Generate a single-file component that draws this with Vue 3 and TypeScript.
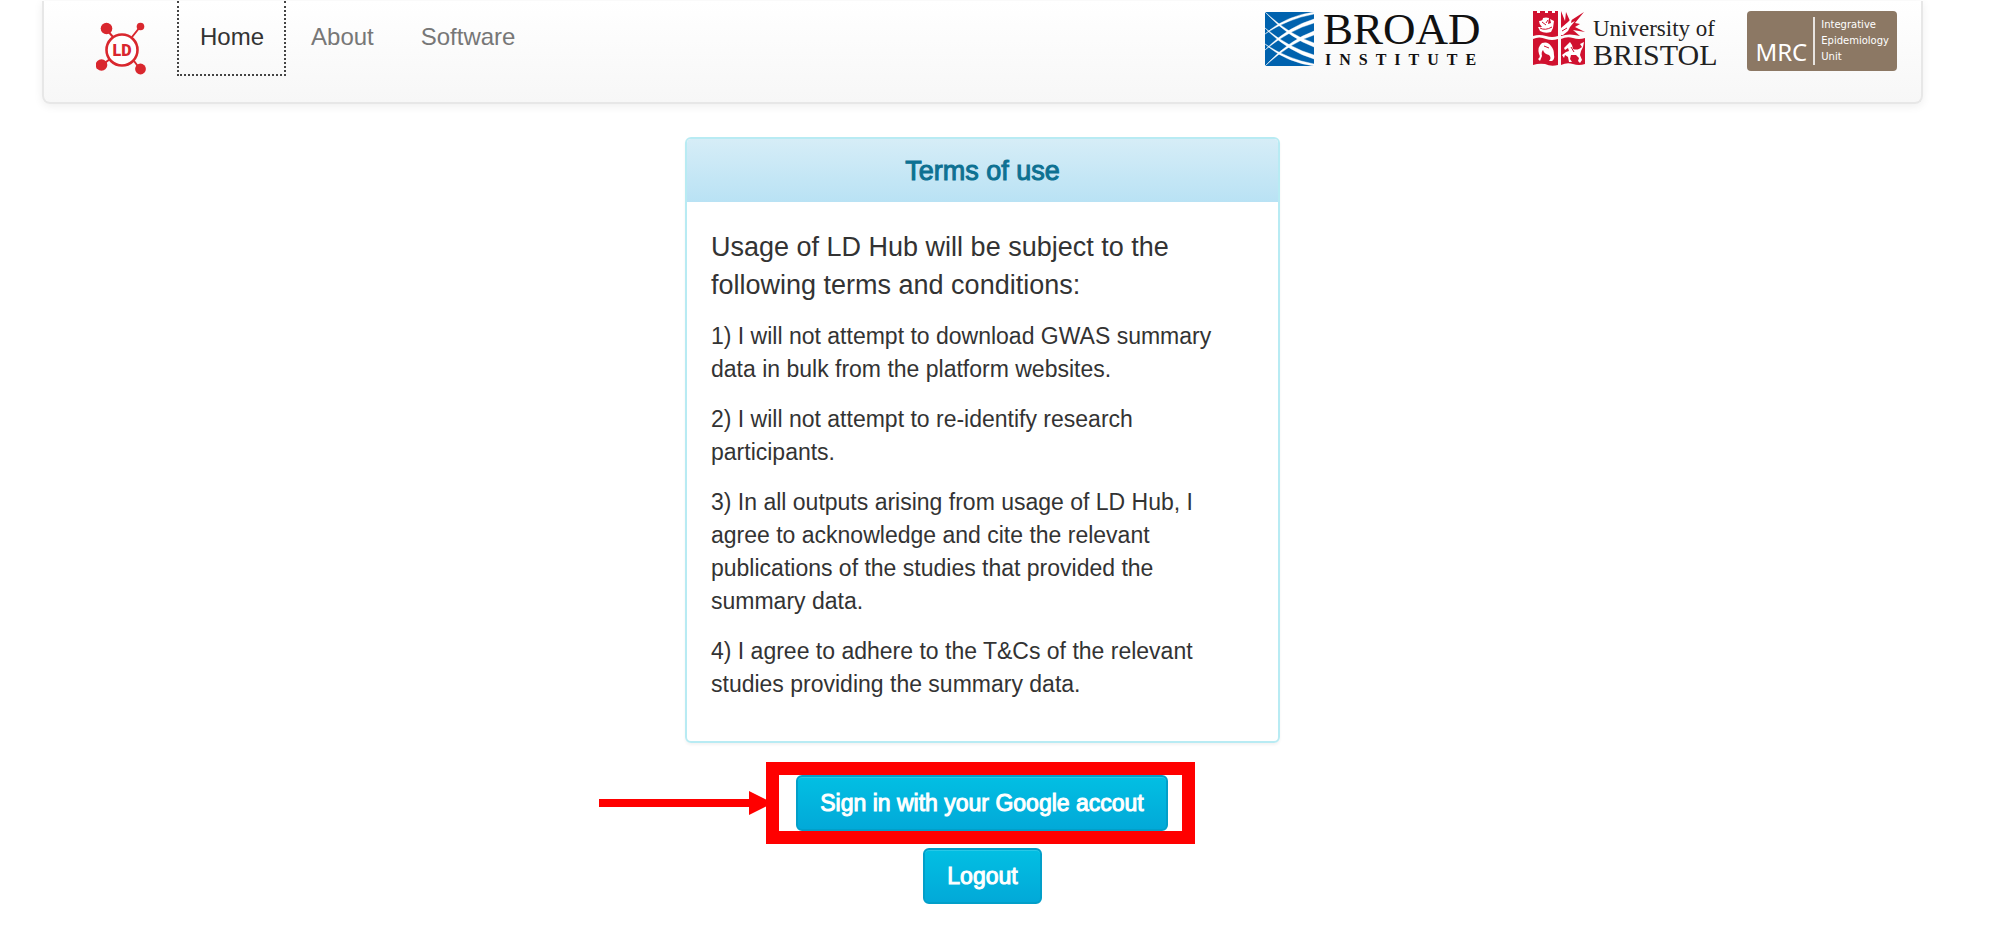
<script setup lang="ts">
interface NavItem {
  label: string
  active: boolean
}

const navItems: NavItem[] = [
  { label: 'Home', active: true },
  { label: 'About', active: false },
  { label: 'Software', active: false },
]

const terms: string[] = [
  '1) I will not attempt to download GWAS summary data in bulk from the platform websites.',
  '2) I will not attempt to re-identify research participants.',
  '3) In all outputs arising from usage of LD Hub, I agree to acknowledge and cite the relevant publications of the studies that provided the summary data.',
  '4) I agree to adhere to the T&Cs of the relevant studies providing the summary data.',
]
</script>

<template>
  <div class="page">
    <header class="navbar">
      <a class="brand" href="#" aria-label="LD Hub">
        <svg width="50" height="54" viewBox="0 0 50 54">
          <g fill="none" stroke="#d9272e" stroke-width="2">
            <path d="M11 8 17 15M44 5 36 15M6 43 14 37M44 47 38 39" />
            <circle cx="26" cy="28" r="15.500" stroke-width="2.600" fill="#fff" />
          </g>
          <g fill="#d9272e">
            <circle cx="10.500" cy="6.500" r="5.800" />
            <circle cx="44.500" cy="4.500" r="3.800" />
            <circle cx="5.500" cy="43" r="5.800" />
            <circle cx="44.500" cy="47" r="5.400" />
            <text x="26" y="34" class="mark-ld" text-anchor="middle">LD</text>
          </g>
        </svg>
      </a>
      <nav class="links">
        <a
          v-for="item in navItems"
          :key="item.label"
          href="#"
          class="link"
          :class="{ active: item.active }"
        >{{ item.label }}</a>
      </nav>
      <div class="partners">
        <a class="partner" href="#" aria-label="Broad Institute">
          <svg width="218" height="69" viewBox="0 -9 218 69">
            <rect x="0" y="1" width="49" height="54" fill="#0062ae" />
            <g fill="#fff" stroke="#fff" stroke-width="0.400">
              <path d="M0 23Q20 5 49 1V3Q22 8 0 23Z" />
              <path d="M0 39Q22 16 49 8V12Q24 19 0 39Z" />
              <path d="M0 55Q24 29 49 20V24Q26 31 0 55Z" />
              <path d="M0 33Q20 51 49 55V53Q22 48 0 33Z" />
              <path d="M0 17Q22 40 49 48V44Q24 37 0 17Z" />
              <path d="M0 1Q24 27 49 36V32Q26 25 0 1Z" />
            </g>
            <text x="58" y="33" class="broad">BROAD</text>
            <text x="60" y="54" class="institute">INSTITUTE</text>
          </svg>
        </a>
        <a class="partner bristol-link" href="#" aria-label="University of Bristol">
          <svg width="190" height="69" viewBox="0 -9 190 69">
            <g fill="#d0112f">
              <path d="M0 0H4V2H7V0H12V2H15V0H19V2H22V0H25V25Q19 27 13 25Q6 23 0 25Z" />
              <path d="M28 0 32 10 33 1 37 10 51 1 42 12 47 13 42 16 52 21 40 19 47 25Q36 22 28 25Z" />
              <path d="M0 28Q6 25 13 28Q19 30 25 28V54Q18 56 12 53Q6 52 0 54Z" />
              <path d="M28 28Q34 25 40 27Q46 29 52 27V53Q46 55 40 53Q34 51 28 54Z" />
            </g>
            <g fill="#fff">
              <path d="M6 10Q10 10 10 7Q13 6 16 7L15 13L18 12L17 8L21 10L20 17L18 21Q12 23 7 20L5 16L9 16Q6 13 6 10Z" />
              <path d="M28 17 35 11 39 7 38 12 42 10 37 16 35 20 30 24 28 24Z" />
              <path d="M6 43Q4 36 9 32Q15 30 18 35Q21 38 21 44Q22 48 19 50L16 50Q19 47 16 44Q11 43 10 39Q8 41 9 45L7 50L5 48Q8 46 6 43Z" />
              <path d="M31 37 35 33 37 31 39 34 40 38Q43 39 46 38L49 36 47 33 51 31 50 36 48 40 47 44 49 49 47 52 45 50 46 47 43 44 38 44 37 48 39 51 36 51 35 46 32 44 31 47 29 44 33 41 36 40 35 37 32 39Z" />
            </g>
            <g stroke="#d0112f" stroke-width="1" fill="none">
              <path d="M9 11 13 14M15 9 13 12M7 17Q12 20 19 16M29 20 34 17M11 35 16 37M38 36 41 41" />
            </g>
            <text x="60" y="25" class="university">University of</text>
            <text x="60" y="54" class="bristol">BRISTOL</text>
          </svg>
        </a>
        <a class="mrc" href="#">
          <span class="mrc-name">MRC</span>
          <span class="mrc-unit">Integrative<br />Epidemiology<br />Unit</span>
        </a>
      </div>
    </header>

    <main class="content">
      <section class="panel">
        <h1 class="panel-title">Terms of use</h1>
        <div class="panel-body">
          <p class="lead">Usage of LD Hub will be subject to the following terms and conditions:</p>
          <p v-for="term in terms" :key="term" class="term">{{ term }}</p>
        </div>
      </section>

      <div class="actions">
        <div class="highlight">
          <svg class="arrow" width="174" height="24" viewBox="0 0 174 24" aria-hidden="true">
            <path d="M0 8H150V0L174 12L150 24V16H0Z" fill="#f00" />
          </svg>
          <button type="button" class="btn">Sign in with your Google accout</button>
        </div>
        <button type="button" class="btn">Logout</button>
      </div>
    </main>
  </div>
</template>

<style>
body {
  margin: 0;
  background: #fff;
}
</style>

<style scoped>
.page {
  padding: 1px 76px 32px 42px;
  font-family: "Liberation Sans", Arial, sans-serif;
  font-size: 23px;
  line-height: 33px;
  color: #333;
}

.navbar {
  display: flex;
  align-items: flex-start;
  box-sizing: border-box;
  min-height: 103px;
  padding: 0 24px 0 52px;
  border: 2px solid #e7e7e7;
  border-top: 0;
  border-radius: 0 0 8px 8px;
  background: linear-gradient(#fff, #f7f7f7);
  box-shadow: 0 2px 10px rgba(0, 0, 0, 0.07);
}

.brand {
  display: block;
  padding-top: 21px;
}

.brand svg,
.partner svg {
  display: block;
}

.mark-ld {
  font: 900 16px Roboto, sans-serif;
}

.links {
  display: flex;
  gap: 2px;
  margin-left: 31px;
}

.link {
  padding: 19px 20px 21px 21px;
  border: 2px dotted transparent;
  border-top: 0;
  color: #777;
  font-size: 24px;
  text-decoration: none;
}

.link.active {
  border-color: #444;
  color: #333;
}

.partners {
  display: flex;
  margin-left: auto;
  padding-top: 1px;
}

.bristol-link {
  margin-left: 50px;
}

.broad {
  font: 45px "Liberation Serif", serif;
  fill: #111;
}

.institute {
  font: bold 16px "Liberation Serif", serif;
  letter-spacing: 8px;
  fill: #111;
}

.university {
  font: 23px "Liberation Serif", serif;
  fill: #222;
}

.bristol {
  font: 30px "Liberation Serif", serif;
  fill: #222;
}

.mrc {
  display: flex;
  box-sizing: border-box;
  height: 60px;
  margin: 9px 0 0 24px;
  padding: 6px 8px 6px 8px;
  border-radius: 4px;
  background: #8c7864;
  color: #fff;
  text-decoration: none;
}

.mrc-name {
  align-self: flex-end;
  padding-right: 6px;
  font: 24px/26px "Noto Sans", sans-serif;
}

.mrc-unit {
  padding-left: 6px;
  border-left: 2px solid #e8e4e0;
  font: 10px/16px "DejaVu Sans", sans-serif;
}

.content {
  display: grid;
  grid-template-columns: repeat(3, 1fr);
  padding-top: 33px;
}

.panel {
  grid-column: 2;
  margin: 0 16px;
  border: 2px solid #b8ebf3;
  border-radius: 6px;
  box-shadow: 0 2px 3px rgba(0, 0, 0, 0.05);
}

.panel-title {
  margin: 0;
  padding: 17px 24px 15px;
  border-radius: 4px 4px 0 0;
  background: linear-gradient(#d6edf7, #b9e2f4);
  color: #0d7192;
  font-size: 27px;
  font-weight: normal;
  line-height: 31px;
  text-align: center;
  -webkit-text-stroke: 1px currentColor;
}

.panel-body {
  padding: 26px 24px 23px;
}

.lead {
  margin: 0 0 16px;
  font-size: 27px;
  line-height: 38px;
}

.term {
  margin: 0 0 17px;
}

.actions {
  grid-column: 1 / -1;
  display: flex;
  flex-direction: column;
  align-items: center;
  gap: 4px;
  padding-top: 19px;
}

.highlight {
  position: relative;
  margin-right: 4px;
  padding: 0 14px 0 17px;
  border: 13px solid #f00;
}

.arrow {
  position: absolute;
  right: 100%;
  top: 16px;
  margin-right: 6px;
}

.btn {
  display: block;
  height: 56px;
  padding: 1px 22px 0;
  border: 2px solid #029fc9;
  border-radius: 6px;
  background: linear-gradient(#02bfe3, #02a9d8);
  box-shadow: inset 0 1px 0 rgba(255, 255, 255, 0.15);
  color: #fff;
  font: 23px/33px "Liberation Sans", Arial, sans-serif;
  -webkit-text-stroke: 1px currentColor;
}
</style>
